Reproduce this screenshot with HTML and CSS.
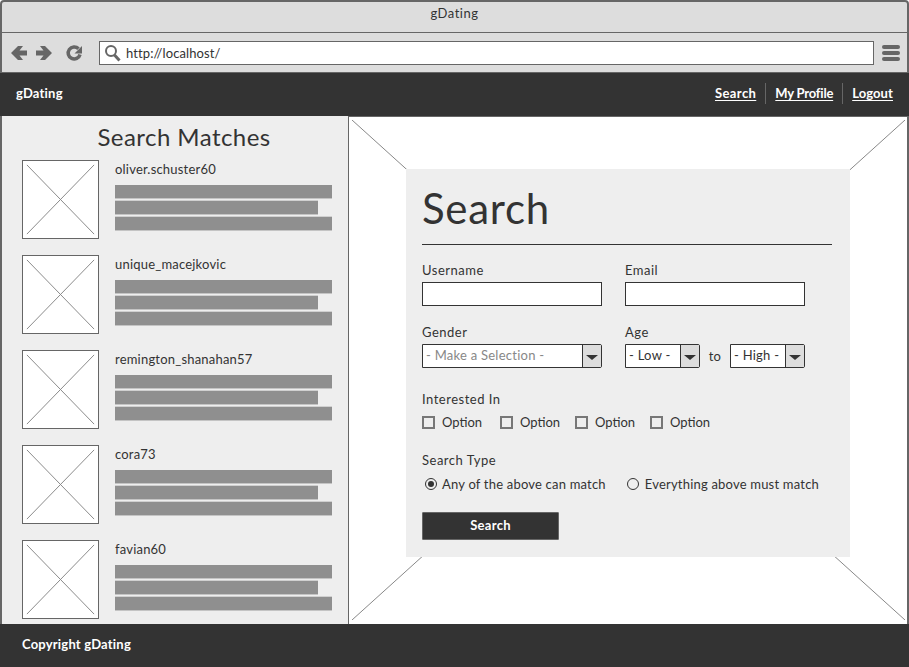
FILE: index.html
```html
<!DOCTYPE html>
<html lang="en">
<head>
<meta charset="utf-8">
<title>gDating</title>
<link rel="stylesheet" href="styles.css">
</head>
<body>
<div class="window">
  <div class="titlebar">gDating</div>
  <div class="toolbar">
    <svg class="tool-arrows" width="72" height="20" viewBox="0 0 72 20">
      <path d="M0 10 7 3h5L8.500 7.500H16v5H8.500L12 17H7Z" fill="#666"/>
      <path d="M41 10 34 3h-5l3.500 4.500H25v5h7.500L29 17h5Z" fill="#666"/>
      <path d="M67.500 5.800A6 6 0 1 0 69 11.500" fill="none" stroke="#666" stroke-width="3.500"/>
      <path d="M71 3v7.500h-7.500Z" fill="#666"/>
    </svg>
    <div class="address">
      <svg width="17" height="18" viewBox="0 0 17 18"><circle cx="7" cy="7" r="5" fill="none" stroke="#666" stroke-width="2"/><path d="M10.500 11 15.500 16.500" stroke="#666" stroke-width="3"/></svg>
      <span>http://localhost/</span>
    </div>
    <div class="burger"><i></i><i></i><i></i></div>
  </div>
  <nav class="navbar">
    <span class="brand">gDating</span>
    <div class="nav-links">
      <a>Search</a><a>My Profile</a><a>Logout</a>
    </div>
  </nav>
  <main class="main">
    <aside class="sidebar">
      <h2>Search Matches</h2>
      <div class="match">
        <svg class="thumb" viewBox="0 0 77 79" preserveAspectRatio="none"><path d="M4 4 73 75M73 4 4 75"/></svg>
        <div class="match-body"><div class="name">oliver.schuster60</div><div class="bar"></div><div class="bar short"></div><div class="bar"></div></div>
      </div>
      <div class="match">
        <svg class="thumb" viewBox="0 0 77 79" preserveAspectRatio="none"><path d="M4 4 73 75M73 4 4 75"/></svg>
        <div class="match-body"><div class="name">unique_macejkovic</div><div class="bar"></div><div class="bar short"></div><div class="bar"></div></div>
      </div>
      <div class="match">
        <svg class="thumb" viewBox="0 0 77 79" preserveAspectRatio="none"><path d="M4 4 73 75M73 4 4 75"/></svg>
        <div class="match-body"><div class="name">remington_shanahan57</div><div class="bar"></div><div class="bar short"></div><div class="bar"></div></div>
      </div>
      <div class="match">
        <svg class="thumb" viewBox="0 0 77 79" preserveAspectRatio="none"><path d="M4 4 73 75M73 4 4 75"/></svg>
        <div class="match-body"><div class="name">cora73</div><div class="bar"></div><div class="bar short"></div><div class="bar"></div></div>
      </div>
      <div class="match">
        <svg class="thumb" viewBox="0 0 77 79" preserveAspectRatio="none"><path d="M4 4 73 75M73 4 4 75"/></svg>
        <div class="match-body"><div class="name">favian60</div><div class="bar"></div><div class="bar short"></div><div class="bar"></div></div>
      </div>
    </aside>
    <section class="content">
      <svg class="backdrop" viewBox="0 0 100 100" preserveAspectRatio="none"><path d="M0 0 100 100M100 0 0 100" vector-effect="non-scaling-stroke"/></svg>
      <form class="card">
        <h1>Search</h1>
        <div class="row row-first">
          <div class="field"><label>Username</label><div class="input"></div></div>
          <div class="field"><label>Email</label><div class="input"></div></div>
        </div>
        <div class="row row-second">
          <div class="field"><label>Gender</label>
            <div class="select wide"><span class="placeholder">- Make a Selection -</span><b><i></i></b></div>
          </div>
          <div class="field"><label>Age</label>
            <div class="age">
              <div class="select small"><span>- Low -</span><b><i></i></b></div>
              <span class="to">to</span>
              <div class="select small"><span>- High -</span><b><i></i></b></div>
            </div>
          </div>
        </div>
        <div class="group interested">
          <label>Interested In</label>
          <div class="checks">
            <span class="check"><i></i>Option</span>
            <span class="check"><i></i>Option</span>
            <span class="check"><i></i>Option</span>
            <span class="check"><i></i>Option</span>
          </div>
        </div>
        <div class="group search-type">
          <label>Search Type</label>
          <div class="radios">
            <span class="radio on"><i></i>Any of the above can match</span>
            <span class="radio"><i></i>Everything above must match</span>
          </div>
        </div>
        <div class="button">Search</div>
      </form>
    </section>
  </main>
  <footer class="footer">Copyright gDating</footer>
</div>
</body>
</html>
```
FILE: styles.css
```css
* { box-sizing: border-box; }
html, body { margin: 0; padding: 0; background: #fff; }
body { font-family: "Lato", "Open Sans", sans-serif; font-size: 13px; color: #333; }
.window { width: 909px; height: 667px; display: flex; flex-direction: column; overflow: hidden; }

.titlebar { height: 33px; flex: none; background: #ddd; border: 2px solid #666; border-bottom-width: 1px; border-radius: 4px 4px 0 0; text-align: center; line-height: 22px; font-size: 13px; letter-spacing: .5px; }

.toolbar { height: 40px; flex: none; background: #ddd; border: solid #666; border-width: 0 2px 1px; display: flex; align-items: center; padding-left: 9px; }
.tool-arrows { flex: none; }
.address { margin-left: 16px; width: 775px; height: 24px; background: #fff; border: 1px solid #666; display: flex; align-items: center; padding-left: 4px; gap: 5px; font-size: 13px; letter-spacing: .1px; }
.burger { margin-left: 8px; width: 18px; display: flex; flex-direction: column; gap: 2px; }
.burger i { display: block; height: 4px; background: #666; border-radius: 2px; }

.navbar { height: 43px; flex: none; background: #333; color: #fff; display: flex; align-items: center; justify-content: space-between; padding: 0 16px 2px; font-weight: 700; font-size: 13px; }
.brand { margin-bottom: 2px; letter-spacing: .2px; }
.nav-links { display: flex; }
.nav-links a { text-decoration: underline; text-underline-offset: 2px; padding: 0 9px; height: 21px; line-height: 20px; border-left: 1px solid #666; letter-spacing: .1px; }
.nav-links a:nth-child(1) { letter-spacing: .4px; }
.nav-links a:nth-child(2) { letter-spacing: -.2px; }
.nav-links a:first-child { border-left: 0; }
.nav-links a:last-child { padding-right: 0; }

.main { height: 508px; flex: none; display: flex; border: solid #666; border-width: 0 2px; background: #fff; }
.sidebar { width: 347px; flex: none; background: #eee; border-right: 1px solid #666; padding: 0 16px 0 20px; overflow: hidden; }
.sidebar h2 { margin: 0; height: 44px; line-height: 41px; text-align: center; font-weight: 400; font-size: 24px; letter-spacing: .45px; padding-left: 14px; }
.match { display: flex; height: 79px; margin-bottom: 16px; }
.thumb { width: 77px; height: 79px; flex: none; background: #fff; border: 1px solid #666; }
.thumb path { stroke: #888; stroke-width: 1; fill: none; }
.match-body { flex: 1; margin-left: 16px; }
.name { height: 25px; line-height: 18px; font-size: 13px; letter-spacing: .2px; }
.bar { height: 13px; background: #8f8f8f; margin-bottom: 3px; box-shadow: 0 1px 0 #c4c4c4; }
.bar + .bar { box-shadow: 0 -1px 0 #d0d0d0, 0 1px 0 #c4c4c4; }
.bar.short { width: 203px; }

.content { flex: 1; min-width: 0; position: relative; display: flex; padding: 52px 57px 67px 57px; border-top: 1px solid #666; }
.backdrop { position: absolute; left: 3px; top: 3px; width: calc(100% - 5px); height: calc(100% - 7px); }
.backdrop path { stroke: #888; stroke-width: 1; fill: none; }
.card { position: relative; flex: 1; min-width: 0; background: #eee; padding: 0 18px 0 16px; }
.card h1 { margin: 0; height: 76px; line-height: 78px; font-weight: 400; font-size: 42px; letter-spacing: .7px; border-bottom: 1px solid #333; }
.row { display: flex; gap: 23px; }
.row-first { margin-top: 17px; }
.row-second { margin-top: 18px; }
.field { width: 180px; }
label { display: block; height: 16px; line-height: 16px; margin-bottom: 4px; font-size: 13px; letter-spacing: .5px; }
.input { height: 24px; background: #fff; border: 1px solid #333; }
.select { height: 24px; background: #fff; border: 1px solid #333; border-radius: 0 2px 2px 0; display: flex; justify-content: space-between; font-size: 13px; line-height: 20px; padding-left: 3px; letter-spacing: .25px; white-space: nowrap; }
.select b { width: 19px; flex: none; background: #ddd; border-left: 1px solid #333; display: flex; align-items: center; justify-content: center; }
.select b i { width: 0; height: 0; margin-top: 2px; border: solid transparent; border-width: 5px 6px 0; border-top-color: #333; }
.placeholder { color: #888; }
.age { display: flex; align-items: center; }
.select.small { width: 75px; }
.to { width: 30px; text-align: center; letter-spacing: .2px; }
.interested { margin-top: 23px; }
.search-type { margin-top: 22px; }
.group label { margin-bottom: 7px; }
.search-type label { margin-bottom: 8px; }
.checks, .radios { display: flex; align-items: center; height: 16px; white-space: nowrap; }
.check { display: flex; align-items: center; width: 75px; gap: 7px; }
.check:first-child { width: 78px; }
.check i { width: 13px; height: 13px; background: #eee; border: 2px solid #777; }
.radio { display: flex; align-items: center; gap: 6px; margin-left: 3px; margin-right: 18px; letter-spacing: .2px; }
.radio:last-child { margin-right: 0; }
.radio.on { gap: 5px; }
.radio i { width: 12px; height: 12px; border: 1px solid #333; border-radius: 50%; display: flex; align-items: center; justify-content: center; }
.radio.on i::after { content: ""; width: 6px; height: 6px; border-radius: 50%; background: #333; }
.button { margin-top: 20px; width: 137px; height: 28px; background: #333; border: 1px solid #666; border-radius: 1px; color: #fff; font-weight: 700; text-align: center; line-height: 25px; letter-spacing: .3px; }

.footer { flex: 1; background: #333; color: #fff; font-weight: 700; padding-left: 22px; line-height: 41px; letter-spacing: .2px; }
```
